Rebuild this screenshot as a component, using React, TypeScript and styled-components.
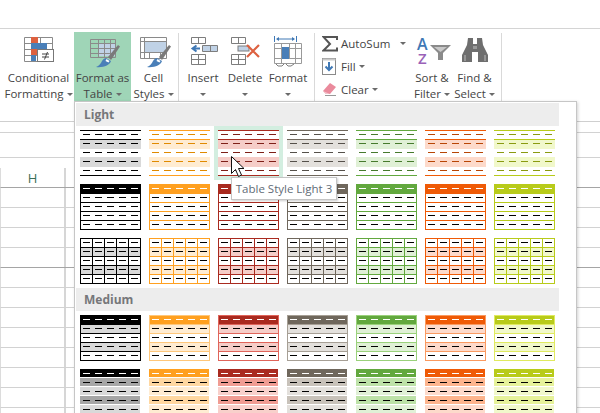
import styled, { createGlobalStyle } from 'styled-components';

const GlobalStyle = createGlobalStyle`
  html, body {
    margin: 0;
    padding: 0;
    width: 600px;
    height: 413px;
    overflow: hidden;
    background: #fff;
    font-family: "Open Sans", "Noto Sans", "Liberation Sans", sans-serif;
  }
`;

const Page = styled.div`
  position: relative;
  width: 600px;
  height: 413px;
  overflow: hidden;
  padding-top: 28px;
  box-sizing: border-box;
`;

const Ribbon = styled.div`
  display: flex;
  height: 94px;
  box-sizing: border-box;
  padding-top: 3px;
  border-top: 1px solid #d4d4d4;
  border-bottom: 1px solid #cfcfcf;
`;

const Group = styled.div<{ $left: number; $right: number }>`
  display: flex;
  padding: 0 ${p => p.$right}px 0 ${p => p.$left}px;
  margin: 1px 0 3px;
  border-right: 1px solid #d9d9d9;
`;

const BigButton = styled.div<{ $width: number; $active?: boolean }>`
  display: flex;
  flex-direction: column;
  align-items: center;
  width: ${p => p.$width}px;
  height: 70px;
  margin-top: -1px;
  background: ${p => (p.$active ? '#9fd5b7' : 'transparent')};
`;

const IconSlot = styled.div`
  height: 38px;
  display: flex;
  align-items: flex-start;
  justify-content: center;
`;

const Label = styled.div`
  display: flex;
  align-items: center;
  justify-content: center;
  height: 16px;
  font-size: 11.5px;
  line-height: 16px;
  color: #444;
  white-space: nowrap;
`;

const Caret = styled.span<{ $gap?: number }>`
  display: inline-block;
  width: 0;
  height: 0;
  margin-left: ${p => p.$gap ?? 3}px;
  border-left: 3px solid transparent;
  border-right: 3px solid transparent;
  border-top: 3px solid #6a6a6a;
`;

const SmallStack = styled.div`
  display: flex;
  flex-direction: column;
  width: 90px;
  margin-top: -1px;
`;

const SmallRow = styled.div`
  display: flex;
  align-items: center;
  height: 23px;
  font-size: 11.5px;
  color: #444;
`;

const SmallIcon = styled.div`
  width: 19px;
  display: flex;
  justify-content: flex-start;
`;

const SheetRow = styled.div<{ $height: number; $dark?: boolean; $line?: boolean; $cols?: boolean }>`
  display: flex;
  height: ${p => p.$height}px;
  box-sizing: border-box;
  border-bottom: ${p => (p.$line === false ? 'none' : `1px solid ${p.$dark ? '#a5a5a5' : '#d2d2d2'}`)};
  border-left: ${p => (p.$cols ? '1px solid #dcdcdc' : 'none')};
`;

const SheetCell = styled.div`
  width: 63px;
  border-right: 2px solid #d6d6d6;
  display: flex;
  align-items: center;
  justify-content: center;
  font-size: 13px;
  color: #3a6f58;
`;

const Menu = styled.div`
  position: absolute;
  left: 74px;
  top: 101px;
  width: 503px;
  height: 330px;
  box-sizing: border-box;
  background: #fff;
  padding: 1px 0 0 1px;
  border: 1px solid #c6c6c6;
  box-shadow: 1px 1px 3px rgba(0, 0, 0, 0.18);
`;

const SectionTitle = styled.div`
  width: 483px;
  height: 23px;
  box-sizing: border-box;
  padding-left: 8px;
  background: #ededed;
  font-size: 12px;
  font-weight: 700;
  line-height: 23px;
  color: #76777a;
`;

const StyleGrid = styled.div`
  display: grid;
  grid-template-columns: repeat(7, 69px);
  grid-auto-rows: 54px;
`;

const StyleCell = styled.div<{ $hover?: boolean }>`
  padding: 4px;
  background: ${p => (p.$hover ? '#d3eee0' : 'transparent')};
`;

const Thumb = styled.svg`
  display: block;
  width: 61px;
  height: 46px;
  background: #fff;
  shape-rendering: crispEdges;
`;

const Pointer = styled.svg`
  position: absolute;
  left: 230px;
  top: 155px;
`;

const Tooltip = styled.div`
  position: absolute;
  left: 231px;
  top: 177px;
  width: 106px;
  height: 23px;
  box-sizing: border-box;
  background: #fff;
  border: 1px solid #c4c4c4;
  box-shadow: 1px 1px 2px rgba(0, 0, 0, 0.2);
  font-size: 11.5px;
  line-height: 21px;
  text-align: center;
  color: #5f6b76;
  white-space: nowrap;
`;

type Palette = { main: string; tint: string; dash: string; edge: string; strong: string; soft: string };

const palettes: Palette[] = [
  { main: '#000000', tint: '#d9d9d9', dash: '#000000', edge: '#000000', strong: '#a6a6a6', soft: '#d9d9d9' },
  { main: '#ffa020', tint: '#ffecd2', dash: '#e08a00', edge: '#ffc77a', strong: '#ffd7a0', soft: '#ffecd2' },
  { main: '#a92a1f', tint: '#f5cdc8', dash: '#7e1f17', edge: '#e0645a', strong: '#f09c93', soft: '#f8d0cb' },
  { main: '#6f675c', tint: '#e3e0dc', dash: '#55504a', edge: '#a69f95', strong: '#c8c2ba', soft: '#e3e0dc' },
  { main: '#62a83e', tint: '#e0f0d6', dash: '#467a2c', edge: '#9ad17b', strong: '#bde2a8', soft: '#e0f0d6' },
  { main: '#ef5a06', tint: '#fddacb', dash: '#b84504', edge: '#fa9a60', strong: '#fdb48d', soft: '#fddacb' },
  { main: '#b8cb1a', tint: '#f1f8cb', dash: '#8a9a10', edge: '#e0ea60', strong: '#e6f29a', soft: '#f1f8cb' },
];

type Kind = 'bands' | 'header' | 'grid' | 'medium' | 'blocks';

const rows = [0, 1, 2, 3, 4];

// one dash per table column, five to a row
function Dashes({ y, color }: { y: number; color: string }) {
  return (
    <>
      {rows.map(i => (
        <rect key={i} x={3 + i * 12} y={y} width={7} height={1} fill={color} />
      ))}
    </>
  );
}

function TableThumb({ kind, c }: { kind: Kind; c: Palette }) {
  if (kind === 'bands') {
    return (
      <Thumb viewBox="0 0 61 46">
        <rect x={0} y={9} width={61} height={10} fill={c.tint} />
        <rect x={0} y={27} width={61} height={10} fill={c.tint} />
        <rect x={0} y={0} width={61} height={1} fill={c.main} />
        <rect x={0} y={9} width={61} height={1} fill={c.main} />
        <rect x={0} y={45} width={61} height={1} fill={c.main} />
        {rows.map(r => (
          <Dashes key={r} y={4 + r * 9} color={c.dash} />
        ))}
      </Thumb>
    );
  }
  if (kind === 'header') {
    return (
      <Thumb viewBox="0 0 61 46">
        <rect x={0} y={0} width={61} height={10} fill={c.main} />
        <rect x={0} y={0} width={1} height={46} fill={c.main} />
        <rect x={60} y={0} width={1} height={46} fill={c.main} />
        {[18, 27, 36, 45].map(y => (
          <rect key={y} x={0} y={y} width={61} height={1} fill={c.main} />
        ))}
        <Dashes y={4} color="#fff" />
        {[1, 2, 3, 4].map(r => (
          <Dashes key={r} y={4 + r * 9} color="#000" />
        ))}
      </Thumb>
    );
  }
  if (kind === 'grid') {
    return (
      <Thumb viewBox="0 0 61 46">
        <rect x={0} y={9} width={61} height={9} fill={c.tint} />
        <rect x={0} y={27} width={61} height={9} fill={c.tint} />
        {[0, 12, 24, 36, 48, 60].map(x => (
          <rect key={x} x={x} y={0} width={1} height={46} fill={c.main} />
        ))}
        {[0, 9, 18, 27, 36, 45].map(y => (
          <rect key={y} x={0} y={y} width={61} height={1} fill={c.main} />
        ))}
        {rows.map(r => (
          <Dashes key={r} y={4 + r * 9} color="#000" />
        ))}
      </Thumb>
    );
  }
  if (kind === 'medium') {
    return (
      <Thumb viewBox="0 0 61 46">
        <rect x={0} y={9} width={61} height={9} fill={c.tint} />
        <rect x={0} y={27} width={61} height={9} fill={c.tint} />
        <rect x={0} y={0} width={1} height={46} fill={c.edge} />
        <rect x={60} y={0} width={1} height={46} fill={c.edge} />
        {[0, 9, 18, 27, 36, 45].map(y => (
          <rect key={y} x={0} y={y} width={61} height={1} fill={c.edge} />
        ))}
        <rect x={1} y={1} width={59} height={8} fill={c.main} />
        <Dashes y={4} color="#fff" />
        {[1, 2, 3, 4].map(r => (
          <Dashes key={r} y={4 + r * 9} color="#000" />
        ))}
      </Thumb>
    );
  }
  const fills = [c.main, c.strong, c.soft, c.strong, c.soft];
  return (
    <Thumb viewBox="0 0 61 46">
      {rows.map(r =>
        rows.map(col => (
          <rect key={`${r}-${col}`} x={col * 12} y={r * 9} width={11.9} height={8} fill={fills[r]} />
        )),
      )}
      <Dashes y={4} color="#fff" />
      {[1, 2, 3, 4].map(r => (
        <Dashes key={r} y={4 + r * 9} color="#000" />
      ))}
    </Thumb>
  );
}

const ConditionalIcon = () => (
  <svg width="32" height="34" viewBox="0 0 32 34">
    <path d="M1.500 5.500h28v24h-28zM1.500 11.500h28M1.500 17.500h28M1.500 23.500h28M9.500 5.500v24M17.500 5.500v24" fill="none" stroke="#8a8a8a" />
    <rect x="8" y="5" width="7" height="6" fill="#dd6140" />
    <rect x="8" y="11" width="16" height="6" fill="#4a7fb8" />
    <rect x="8" y="17" width="10" height="6" fill="#dd6140" />
    <rect x="8" y="23" width="5" height="6" fill="#4a7fb8" />
    <rect x="14.500" y="17.500" width="16" height="12" fill="#fff" stroke="#777" />
    <path d="M19 22h7M19 25h7M24.500 20l-3 7.500" fill="none" stroke="#444" />
  </svg>
);

const Brush = () => (
  <>
    <path d="M23 25l10-12 2 1.500-9 13.500z" fill="#7a7a7a" />
    <path d="M21 26l5 3c-1 4-8 7-15 6 3-1 5-4 6-6 1-2 3-3 4-3z" fill="#4a7fb8" />
    <path d="M21.500 27l3 2-1 1.500-3-1.500z" fill="#fff" />
  </>
);

const FormatTableIcon = () => (
  <svg width="36" height="36" viewBox="0 0 36 36">
    <rect x="13" y="11" width="17" height="13" fill="#c0d2e6" />
    <path d="M5.500 7.500h25v18h-25zM5.500 11.500h25M5.500 16.500h25M5.500 21.500h25M13.500 7.500v18M19.500 7.500v18M25.500 7.500v18" fill="none" stroke="#8a8a8a" />
    <Brush />
  </svg>
);

const CellStylesIcon = () => (
  <svg width="36" height="36" viewBox="0 0 36 36">
    <rect x="9" y="9" width="21" height="11" fill="#c0d2e6" />
    <path d="M4.500 5.500h26v21h-26zM4.500 9.500h26M8.500 5.500v21M4.500 20.500h26M24.500 20.500v6M13.500 20.500v6" fill="none" stroke="#8a8a8a" />
    <Brush />
  </svg>
);

const InsertIcon = () => (
  <svg width="30" height="34" viewBox="0 0 30 34">
    <path d="M3.500 5.500h14v6h-14zM10.500 5.500v6M3.500 22.500h14v10h-14zM3.500 27.500h14M10.500 22.500v10" fill="none" stroke="#7d7d7d" />
    <rect x="15" y="14" width="14" height="5" fill="#c0d2e6" />
    <path d="M14.500 13.500h15v6h-15zM22.500 13.500v6" fill="none" stroke="#7d7d7d" />
    <path d="M12 16.500H6M8.500 13.500l-4 3 4 3" fill="none" stroke="#3f78b5" strokeWidth="2" />
  </svg>
);

const DeleteIcon = () => (
  <svg width="32" height="34" viewBox="0 0 32 34">
    <path d="M2.500 5.500h14v6h-14zM9.500 5.500v6M2.500 22.500h14v10h-14zM2.500 27.500h14M9.500 22.500v10" fill="none" stroke="#7d7d7d" />
    <rect x="9" y="14" width="11" height="5" fill="#c0d2e6" stroke="#7d7d7d" />
    <path d="M18 13l12 12M30 13L18 25" stroke="#dd6140" strokeWidth="2.200" fill="none" />
  </svg>
);

const FormatIcon = () => (
  <svg width="30" height="36" viewBox="0 0 30 36">
    <path d="M1.500 4v6M23.500 4v6M4 7h17" stroke="#3f78b5" fill="none" />
    <path d="M3 7l3-2v4zM22 7l-3-2v4z" fill="#3f78b5" />
    <path d="M1.500 11.500h27v20h-27zM1.500 16.500h27M1.500 26.500h27M8.500 11.500v20M16.500 11.500v15M22.500 11.500v20" fill="none" stroke="#9a9a9a" />
    <rect x="9" y="15" width="7" height="12" fill="#4a7fb8" />
    <path d="M3 32l2 2h4l2-2M13 32l2 2h3l3-2" fill="none" stroke="#7d7d7d" />
  </svg>
);

const SumIcon = () => (
  <svg width="16" height="16" viewBox="0 0 16 16">
    <path d="M15 4V1H1.500L8 8l-6.500 6.500H15v-3" fill="none" stroke="#555" strokeWidth="2" />
  </svg>
);

const FillIcon = () => (
  <svg width="15" height="17" viewBox="0 0 15 17">
    <rect x="0.500" y="0.500" width="13" height="16" fill="#fff" stroke="#8a8a8a" />
    <rect x="0.500" y="0.500" width="13" height="2" fill="#c9c9c9" />
    <path d="M7 4v8M3.500 8.500L7 12l3.500-3.500" fill="none" stroke="#3f78b5" strokeWidth="2" />
  </svg>
);

const EraserIcon = () => (
  <svg width="15" height="15" viewBox="0 0 15 15">
    <path d="M1 9l7-8 6 4-6 7H4z" fill="#ea8a9c" />
    <path d="M1 9l3 3h4" fill="#f3c3cc" />
    <path d="M3 13.500h11" stroke="#999" />
  </svg>
);

const SortIcon = () => (
  <svg width="38" height="36" viewBox="0 0 38 36">
    <text x="4" y="18" fontFamily="Open Sans, sans-serif" fontSize="16" fontWeight="600" fill="#3f78b5">A</text>
    <text x="5" y="32" fontFamily="Open Sans, sans-serif" fontSize="15" fontWeight="600" fill="#9a62b8">Z</text>
    <path d="M17 13h21l-8 8v7h-5v-7z" fill="#8a8a8a" />
    <path d="M21 15h13l-6.500 5z" fill="#c9c9c9" />
  </svg>
);

const FindIcon = () => (
  <svg width="28" height="36" viewBox="0 0 28 36">
    <path d="M7 6h5v6h4V6h5l1 7 5 10v7H17V20h-6v10H1v-7l5-10z" fill="#6e6e6e" />
    <path d="M12 14h4v3h-4z" fill="#9a9a9a" />
    <path d="M4 23v6M24 23v6" stroke="#bdbdbd" />
  </svg>
);

const sheetRows = [
  { height: 11 },
  { height: 25 },
  { height: 10, line: false },
  { height: 20, dark: true, cols: true, label: 'H' },
  ...Array.from({ length: 12 }, (_, i) => ({ height: 20, dark: i === 3, cols: true })),
];

const lightKinds: Kind[] = ['bands', 'header', 'grid'];
const mediumKinds: Kind[] = ['medium', 'blocks'];

export default function App() {
  return (
    <Page>
      <GlobalStyle />
      <Ribbon>
        <Group $left={3} $right={2}>
          <BigButton $width={71}>
            <IconSlot><ConditionalIcon /></IconSlot>
            <Label>Conditional</Label>
            <Label>Formatting<Caret /></Label>
          </BigButton>
          <BigButton $width={57} $active>
            <IconSlot><FormatTableIcon /></IconSlot>
            <Label>Format as</Label>
            <Label>Table<Caret /></Label>
          </BigButton>
          <BigButton $width={45}>
            <IconSlot><CellStylesIcon /></IconSlot>
            <Label>Cell</Label>
            <Label>Styles<Caret /></Label>
          </BigButton>
        </Group>
        <Group $left={3} $right={4}>
          <BigButton $width={42}>
            <IconSlot><InsertIcon /></IconSlot>
            <Label>Insert</Label>
            <Label><Caret $gap={0} /></Label>
          </BigButton>
          <BigButton $width={42}>
            <IconSlot><DeleteIcon /></IconSlot>
            <Label>Delete</Label>
            <Label><Caret $gap={0} /></Label>
          </BigButton>
          <BigButton $width={44}>
            <IconSlot><FormatIcon /></IconSlot>
            <Label>Format</Label>
            <Label><Caret $gap={0} /></Label>
          </BigButton>
        </Group>
        <Group $left={7} $right={4}>
          <SmallStack>
            <SmallRow><SmallIcon><SumIcon /></SmallIcon>AutoSum<Caret $gap={10} /></SmallRow>
            <SmallRow><SmallIcon><FillIcon /></SmallIcon>Fill<Caret /></SmallRow>
            <SmallRow><SmallIcon><EraserIcon /></SmallIcon>Clear<Caret /></SmallRow>
          </SmallStack>
          <BigButton $width={40}>
            <IconSlot><SortIcon /></IconSlot>
            <Label>Sort &amp;</Label>
            <Label>Filter<Caret /></Label>
          </BigButton>
          <BigButton $width={45}>
            <IconSlot><FindIcon /></IconSlot>
            <Label>Find &amp;</Label>
            <Label>Select<Caret /></Label>
          </BigButton>
        </Group>
      </Ribbon>

      {sheetRows.map((row, i) => (
        <SheetRow key={i} $height={row.height} $dark={row.dark} $line={row.line} $cols={row.cols}>
          {row.cols && <SheetCell>{row.label}</SheetCell>}
        </SheetRow>
      ))}

      <Menu>
        <SectionTitle>Light</SectionTitle>
        <StyleGrid>
          {lightKinds.map(kind =>
            palettes.map((c, i) => (
              <StyleCell key={`${kind}-${i}`} $hover={kind === 'bands' && i === 2}>
                <TableThumb kind={kind} c={c} />
              </StyleCell>
            )),
          )}
        </StyleGrid>
        <SectionTitle>Medium</SectionTitle>
        <StyleGrid>
          {mediumKinds.map(kind =>
            palettes.map((c, i) => (
              <StyleCell key={`${kind}-${i}`}>
                <TableThumb kind={kind} c={c} />
              </StyleCell>
            )),
          )}
        </StyleGrid>
      </Menu>

      <Tooltip>Table Style Light 3</Tooltip>
      <Pointer width="14" height="23" viewBox="0 0 14 23">
        <path d="M1.500 1.500v17l4-4 3 7 3-1.500-3-6.500h5.500z" fill="#fff" stroke="#111" />
      </Pointer>
    </Page>
  );
}
